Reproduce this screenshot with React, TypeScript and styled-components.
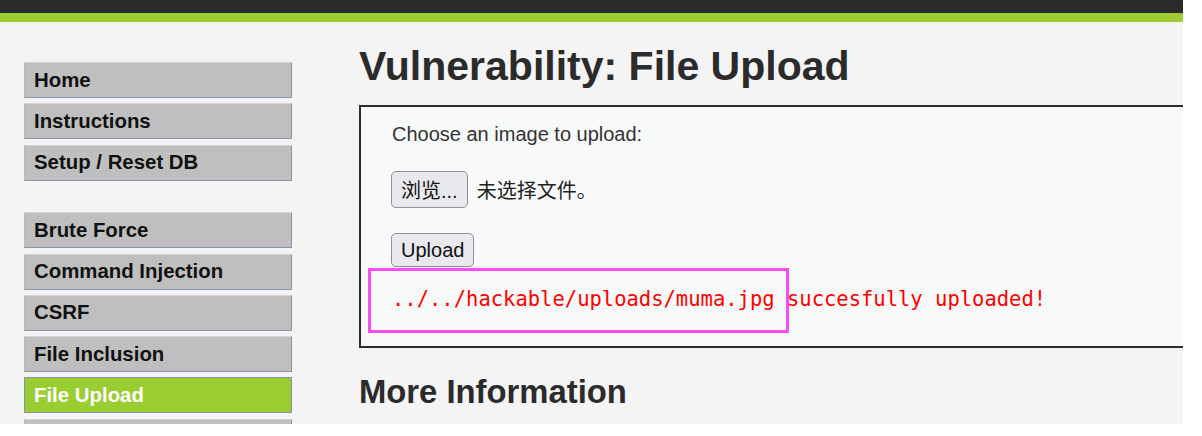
import React from "react";
import styled, { createGlobalStyle } from "styled-components";

const GlobalStyle = createGlobalStyle`
  html, body { margin: 0; padding: 0; background: #ffffff; }
  body { font-family: "Liberation Sans", Arial, "Noto Sans CJK SC", sans-serif; }
`;

const Page = styled.div`
  width: 1183px;
  height: 424px;
  overflow: hidden;
  background: #f4f4f4;
  display: flex;
  flex-direction: column;
`;

const Header = styled.header`
  height: 13px;
  background: #2b2b2b;
  border-bottom: 9px solid #9fcb33;
  flex: none;
`;

const Body = styled.div`
  display: flex;
  align-items: flex-start;
  flex: 1;
  min-height: 0;
`;

const Sidebar = styled.nav`
  width: 268px;
  margin-left: 24px;
  padding-top: 40px;
  display: flex;
  flex-direction: column;
  gap: 31.8px;
  flex: none;
`;

const MenuGroup = styled.ul`
  list-style: none;
  margin: 0;
  padding: 0;
  display: flex;
  flex-direction: column;
  gap: 5.25px;
`;

const MenuItem = styled.li<{ $active?: boolean }>`
  box-sizing: border-box;
  height: 36px;
  display: flex;
  align-items: center;
  padding-left: 9px;
  font-size: 20.4px;
  font-weight: bold;
  color: ${(p) => (p.$active ? "#ffffff" : "#111111")};
  background: ${(p) => (p.$active ? "#9acd32" : "#bfbfbf")};
  border: 1px solid #8795ab;
  border-top-color: ${(p) => (p.$active ? "#8795ab" : "#d3d3d3")};
  border-left-color: ${(p) => (p.$active ? "#8795ab" : "#b4b8c0")};
`;

const Main = styled.main`
  margin-left: 67px;
  flex: 1;
  min-width: 0;
  overflow: hidden;
  color: #2b2b2b;
`;

const Title = styled.h1`
  margin: 21px 0 16px;
  font-size: 41px;
  line-height: 46px;
  font-weight: bold;
  color: #2b2b2b;
  white-space: nowrap;
`;

const CodeArea = styled.div`
  position: relative;
  width: 900px;
  box-sizing: border-box;
  border: 2px solid #2d2d2d;
  background: #f8f9f9;
  padding: 16px 0 35px 31px;
`;

const Prompt = styled.p`
  margin: 0;
  font-size: 20px;
  line-height: 23px;
  color: #333333;
`;

const FileRow = styled.div`
  display: flex;
  align-items: center;
  gap: 9px;
  margin-top: 25px;
  font-size: 20px;
  color: #222222;
`;

const NativeButton = styled.button<{ $height: number }>`
  box-sizing: border-box;
  height: ${(p) => p.$height}px;
  padding: 0 9px;
  margin: 0 0 0 -1px;
  font-family: "Liberation Sans", Arial, "Noto Sans CJK SC", sans-serif;
  font-size: 20px;
  color: #111111;
  background: #e9e9ed;
  border: 1px solid #8f8f9d;
  border-radius: 5px;
`;

const SubmitRow = styled.div`
  margin-top: 25px;
  display: flex;
`;

const Result = styled.pre`
  margin: 20px 0 0;
  font-family: "DejaVu Sans Mono", "Liberation Mono", monospace;
  font-size: 20.5px;
  line-height: 24px;
  color: #ff0000;
`;

const Highlight = styled.div`
  position: absolute;
  left: 7px;
  top: 161px;
  width: 421px;
  height: 65px;
  box-sizing: border-box;
  border: 3px solid #fa4cf7;
  pointer-events: none;
`;

const SubTitle = styled.h2`
  margin: 25px 0 0;
  font-size: 32.8px;
  line-height: 37px;
  font-weight: bold;
  color: #2b2b2b;
`;

const groups = [
  ["Home", "Instructions", "Setup / Reset DB"],
  ["Brute Force", "Command Injection", "CSRF", "File Inclusion", "File Upload", ""],
];

export default function App() {
  return (
    <>
      <GlobalStyle />
      <Page>
        <Header />
        <Body>
          <Sidebar>
            {groups.map((g, i) => (
              <MenuGroup key={i}>
                {g.map((item, j) => (
                  <MenuItem key={j} $active={item === "File Upload"}>
                    {item}
                  </MenuItem>
                ))}
              </MenuGroup>
            ))}
          </Sidebar>
          <Main>
            <Title>Vulnerability: File Upload</Title>
            <CodeArea>
              <Prompt>Choose an image to upload:</Prompt>
              <FileRow>
                <NativeButton $height={37}>浏览...</NativeButton>
                <span>未选择文件。</span>
              </FileRow>
              <SubmitRow>
                <NativeButton $height={34}>Upload</NativeButton>
              </SubmitRow>
              <Result>../../hackable/uploads/muma.jpg succesfully uploaded!</Result>
              <Highlight />
            </CodeArea>
            <SubTitle>More Information</SubTitle>
          </Main>
        </Body>
      </Page>
    </>
  );
}
